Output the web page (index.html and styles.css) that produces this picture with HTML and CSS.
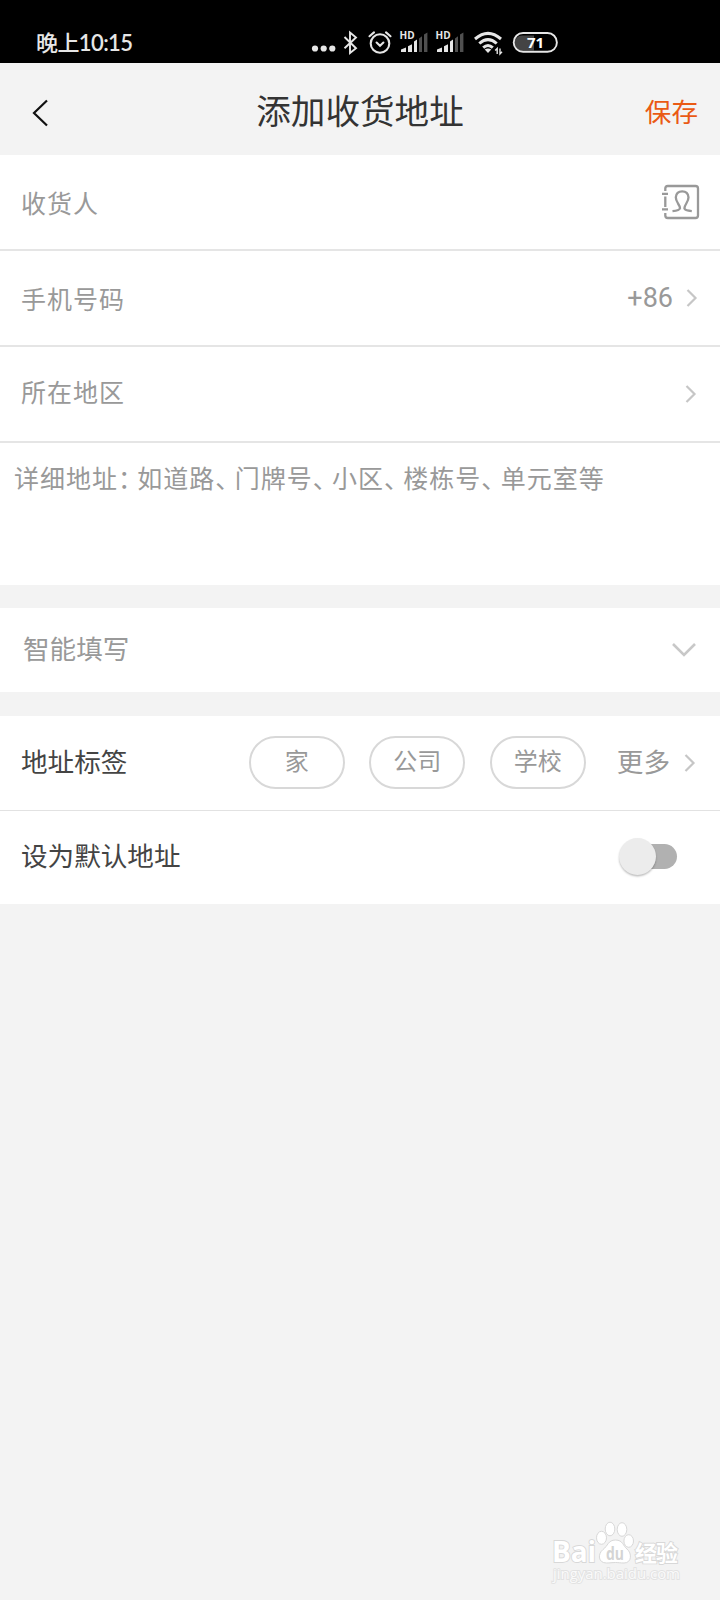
FILE: index.html
```html
<!DOCTYPE html>
<html lang="zh-CN">
<head>
<meta charset="utf-8">
<title>添加收货地址</title>
<link rel="stylesheet" href="styles.css">
</head>
<body>
<div class="screen">
  <div class="status">
    <span class="clock"><span class="clock-label">晚上</span>10:15</span>
    <svg class="status-icons" width="256" height="40" viewBox="304 23 256 40">
      <g fill="#e6e6e6">
        <circle cx="315" cy="48.5" r="3.1"/><circle cx="323.7" cy="48.5" r="3.1"/><circle cx="332.3" cy="48.5" r="3.1"/>
      </g>
      <path d="M344.5 37 L356 48.2 L350 53 V32.5 L356 37.5 L344.5 48.3" fill="none" stroke="#e6e6e6" stroke-width="1.9"/>
      <g fill="none" stroke="#e6e6e6" stroke-width="2.1" stroke-linecap="round">
        <circle cx="380" cy="43.5" r="9.3"/>
        <path d="M369.5 36.2 L374 32.4 M390.5 36.2 L386 32.4 M376.6 42.5 L380 45.7 L383.4 42.5"/>
      </g>
      <g id="signal">
        <text x="399.6" y="38.6" class="hd">HD</text>
        <path d="M401 52 V49.6 L406 47.6 V52Z M408 52 V46.3 L412 44.2 V52Z M414 52 V41.6 L417 39.6 V52Z" fill="#e6e6e6"/>
        <path d="M419 52 V38.4 L422 36.2 V52Z M424 52 V34.6 L427.4 32.6 V52Z" fill="#505050"/>
      </g>
      <use href="#signal" x="36"/>
      <g fill="none" stroke="#e6e6e6" stroke-width="3">
        <path d="M475 39 Q488 27.7 501 39 M479.3 43.5 Q488 35.8 496.7 43.5 M483.2 47.7 Q488 43.4 492.8 47.7"/>
      </g>
      <path d="M484.7 49.6 Q488 47.2 491.3 49.6 L488 53Z" fill="#e6e6e6"/>
      <path d="M497.2 54 V48.5 L495.2 50.6 M500 48.5 V54 L502 51.8" fill="none" stroke="#e6e6e6" stroke-width="1.4"/>
      <path d="M522 35.5 H534 V50.5 H522 A7.5 7.5 0 0 1 522 35.5Z" fill="#444"/>
      <rect x="513.7" y="33" width="43.2" height="18.8" rx="9.4" fill="none" stroke="#e6e6e6" stroke-width="1.9"/>
      <text x="535.6" y="48.2" class="charge">71</text>
    </svg>
  </div>

  <div class="header">
    <svg class="back" width="16" height="28" viewBox="0 0 16 28"><path d="M15 1.5 L2 14 L15 26.5" fill="none" stroke="#111" stroke-width="2.2"/></svg>
    <h1 class="title">添加收货地址</h1>
    <span class="save">保存</span>
  </div>

  <div class="row field">
    <span class="hint">收货人</span>
    <svg class="contacts" width="40" height="36" viewBox="0 0 40 36" fill="none" stroke="#999" stroke-width="2.3">
      <path d="M4.3 7 V4.5 Q4.3 2 6.8 2 H34.5 Q37 2 37 4.5 V31.5 Q37 34 34.5 34 H6.8 Q4.3 34 4.3 31.5 V29 M4.3 12.5 V23 M1 9.8 H7 M1 25.3 H7"/>
      <path d="M11.5 27.2 Q18.5 26.5 19 24.3 Q19 22.5 17 19.5 Q14.8 16 14.8 13.3 Q15.3 7.3 21.2 7.3 Q27 7.3 27.5 13.3 Q27.5 16 25.3 19.5 Q23.4 22.5 23.4 24.3 Q23.8 26.5 30.8 27.2"/>
    </svg>
  </div>
  <div class="row field phone">
    <span class="hint">手机号码</span>
    <span class="code">+86</span>
    <svg class="chevron" width="12" height="20" viewBox="0 0 12 20"><path d="M1.5 2 L9.5 10 L1.5 18"/></svg>
  </div>
  <div class="row field region">
    <span class="hint">所在地区</span>
    <svg class="chevron" width="12" height="20" viewBox="0 0 12 20"><path d="M1.5 2 L9.5 10 L1.5 18"/></svg>
  </div>
  <div class="detail hint">详细地址<span class="punct">：</span>如道路<span class="punct">、</span>门牌号<span class="punct">、</span>小区<span class="punct">、</span>楼栋号<span class="punct">、</span>单元室等</div>

  <div class="row smart">
    <span class="smart-label">智能填写</span>
    <svg class="expand" width="26" height="16" viewBox="0 0 26 16"><path d="M2 2 L13 13 L24 2"/></svg>
  </div>

  <div class="row tags">
    <span class="label">地址标签</span>
    <div class="chips">
      <span class="chip">家</span>
      <span class="chip">公司</span>
      <span class="chip">学校</span>
    </div>
    <span class="more">更多</span>
    <svg class="chevron" width="12" height="20" viewBox="0 0 12 20"><path d="M1.5 2 L9.5 10 L1.5 18"/></svg>
  </div>
  <div class="row default">
    <span class="label">设为默认地址</span>
    <span class="switch"><span class="knob"></span></span>
  </div>

  <div class="watermark">
    <svg width="140" height="66" viewBox="0 0 140 66">
      <text x="2" y="42" class="wm wm-bai" textLength="44">Bai</text>
      <g fill="#fff" stroke="#d8d8d8" stroke-width="1">
        <ellipse cx="51.5" cy="17.8" rx="5" ry="6.5"/><ellipse cx="60" cy="9" rx="4.8" ry="6.8"/>
        <ellipse cx="72" cy="9.5" rx="4.8" ry="6.8"/><ellipse cx="78.7" cy="21" rx="4.8" ry="6.3"/>
        <path d="M65.5 20 C73 20 73 26 77 29 C82 33 82 43 74 43 C70 43 69 42.5 65.5 42.5 C62 42.5 60 43 56.5 43 C48 43 47.5 34 53 29.5 C58 26 58 20 65.5 20Z"/>
      </g>
      <text x="56" y="40" class="wm-du" textLength="18" lengthAdjust="spacingAndGlyphs">du</text>
      <text x="85" y="41" class="wm wm-cn" textLength="43">经验</text>
      <text x="3" y="58.5" class="wm wm-url" textLength="127">jingyan.baidu.com</text>
    </svg>
  </div>
</div>
</body>
</html>
```
FILE: styles.css
```css
* { box-sizing: border-box; }
body {
  margin: 0;
  background: #f3f3f3;
  font-family: "Noto Sans CJK SC", sans-serif;
}
.screen {
  width: 720px;
  height: 1600px;
  display: flex;
  flex-direction: column;
  background: #f3f3f3;
  overflow: hidden;
}
.status {
  height: 63px;
  flex: none;
  display: flex;
  align-items: flex-end;
  background: #000;
  color: #e6e6e6;
}
.clock {
  width: 268px;
  margin-left: 36px;
  padding-bottom: 5px;
  font: 600 22px/30px Lato, "Noto Sans CJK SC", sans-serif;
  letter-spacing: -.6px;
}
.clock-label { font-size: 22px; font-weight: 500; }
.hd { font: 700 10px "Open Sans", sans-serif; fill: #e6e6e6; }
.charge { font: 700 15px "Open Sans", sans-serif; fill: #fff; text-anchor: middle; }
.header {
  height: 92px;
  flex: none;
  display: grid;
  grid-template-columns: 120px 1fr 120px;
  align-items: center;
  padding: 0 22px 0 32px;
}
.title {
  margin: 0;
  padding-right: 10px;
  text-align: center;
  font-size: 34.6px;
  line-height: 50px;
  font-weight: 400;
  color: #333;
}
.back { margin-top: 8px; }
.save { padding-top: 4px; text-align: right; font-size: 26.6px; line-height: 40px; color: #ea5a14; }
.row {
  flex: none;
  display: flex;
  align-items: center;
  padding: 0 22px 0 21px;
  background: #fff;
}
.field { height: 96px; border-bottom: 2px solid #e5e5e5; }
.hint { font-size: 25px; letter-spacing: 1px; color: #999; }
.field .hint { padding-bottom: 1px; }
.region .hint { padding-bottom: 6px; }
.contacts { margin-left: auto; margin-right: -2.5px; }
.code {
  margin-left: auto;
  margin-right: 13px;
  font: 27px/40px Roboto, sans-serif;
  color: #999;
}
.chevron { fill: none; stroke: #c6c6c6; stroke-width: 2.2; }
.region .chevron { margin-left: auto; margin-right: 1.3px; }
.detail {
  flex: none;
  height: 142px;
  margin-bottom: 23px;
  padding: 14px 14px;
  background: #fff;
  line-height: 40px;
  white-space: nowrap;
}
.punct { letter-spacing: -5.7px; }
.smart { height: 84px; margin-bottom: 24px; }
.smart-label { margin-left: 2px; padding-bottom: 6px; font-size: 26.6px; color: #999; }
.expand { margin-left: auto; margin-right: 1px; fill: none; stroke: #c8c8c8; stroke-width: 2.6; }
.tags { height: 95px; border-bottom: 1px solid #e2e2e2; }
.label { padding-bottom: 5px; font-size: 26.6px; color: #444; }
.chips { display: flex; gap: 24.5px; margin: 0 0 2px auto; }
.chip {
  width: 96px;
  height: 53px;
  border: 2px solid #d8d8d8;
  border-radius: 27px;
  text-align: center;
  font-size: 24px;
  line-height: 44px;
  color: #999;
}
.more { margin-left: 31px; margin-right: 14px; padding-bottom: 6px; font-size: 26.6px; color: #999; }
.tags .chevron { margin-right: 2px; margin-bottom: 1px; }
.default { height: 93px; }
.default .label { padding-bottom: 6px; }
.switch {
  display: flex;
  align-items: center;
  width: 54px;
  height: 25px;
  margin: 0 21px 2px auto;
  border-radius: 13px;
  background: #b1b1b1;
}
.knob {
  flex: none;
  width: 37px;
  height: 37px;
  margin-left: -4px;
  border-radius: 50%;
  background: #ececec;
  box-shadow: 0 1.5px 2px rgba(0, 0, 0, .25);
}
.watermark { margin: auto 30px 14px auto; height: 66px; }
.wm { fill: #fff; stroke: #d8d8d8; stroke-width: 1.8px; paint-order: stroke; }
.wm-bai { font: 700 28px "Open Sans", sans-serif; }
.wm-du { font: 700 18px "Open Sans", sans-serif; fill: #d4d4d4; }
.wm-cn { font: 700 22px "Noto Sans CJK SC", sans-serif; }
.wm-url { font: 400 15px "Open Sans", sans-serif; fill: #fafafa; stroke: #e2e2e2; }
```
